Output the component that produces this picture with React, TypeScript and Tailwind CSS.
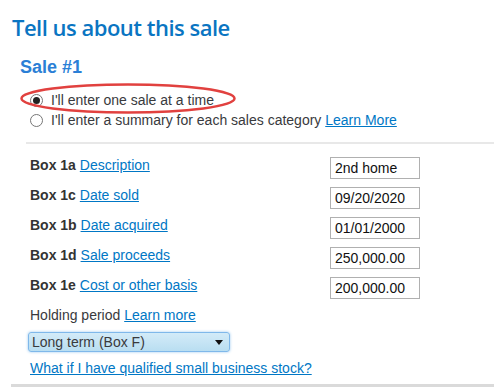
import React from "react";

const rows = [
  { box: "Box 1a", label: "Description", value: "2nd home" },
  { box: "Box 1c", label: "Date sold", value: "09/20/2020" },
  { box: "Box 1b", label: "Date acquired", value: "01/01/2000" },
  { box: "Box 1d", label: "Sale proceeds", value: "250,000.00" },
  { box: "Box 1e", label: "Cost or other basis", value: "200,000.00" },
];

const Radio = ({ checked }: { checked?: boolean }) => (
  <span className="flex h-[13px] w-[13px] shrink-0 items-center justify-center rounded-full border border-[#767676] bg-white">
    {checked && <span className="h-[7px] w-[7px] rounded-full bg-[#222]" />}
  </span>
);

const SaleForm = () => {
  return (
    <div className="relative h-[391px] w-[494px] overflow-hidden bg-white font-['Liberation_Sans',Arial,sans-serif] text-[14px] text-[#393a3d]">
      <h1 className="mt-[12px] h-[30px] pl-[12px] font-['Open_Sans',sans-serif] text-[22px] font-semibold leading-[30px] tracking-[-0.5px] text-[#0a75c2]">
        Tell us about this sale
      </h1>
      <h2 className="mt-[15px] pl-[20px] text-[18px] font-bold leading-[20px] text-[#2b7fd6]">
        Sale #1
      </h2>

      <div className="mt-[13px] pl-[30px]">
        <label className="flex h-[20px] items-center gap-[8px]">
          <Radio checked />
          <span>I'll enter one sale at a time</span>
        </label>
        <label className="flex h-[20px] items-center gap-[8px]">
          <Radio />
          <span>
            I'll enter a summary for each sales category{" "}
            <a className="text-[#0077c5] underline">Learn More</a>
          </span>
        </label>
      </div>

      <div className="ml-[26px] mt-[12px] h-[2px] bg-[#e8e8e8]" />

      <div className="mt-[13px] pl-[30px]">
        {rows.map((row) => (
          <div key={row.box} className="flex h-[30px] items-start">
            <div className="w-[300px] leading-[16px]">
              <span className="font-bold text-[#333]">{row.box}</span>{" "}
              <a className="text-[#0077c5] underline">{row.label}</a>
            </div>
            <div className="flex h-[22px] w-[90px] items-center border border-[#b0b0b0] px-[4px] text-[#111]">
              {row.value}
            </div>
          </div>
        ))}
      </div>

      <div className="pl-[30px] leading-[16px]">
        Holding period <a className="text-[#0077c5] underline">Learn more</a>
      </div>

      <div className="ml-[28px] mt-[9px] flex h-[20px] w-[202px] items-center justify-between rounded-[3px] border border-[#7fb8ea] bg-gradient-to-b from-[#d3ebf8] to-[#b9def1] pl-[3px] pr-[6px] shadow-[0_0_3px_#9cc9f0]">
        <span>Long term (Box F)</span>
        <svg width="8" height="5" viewBox="0 0 8 5">
          <path d="M0 0h8L4 5z" fill="#111" />
        </svg>
      </div>

      <div className="mt-[8px] pl-[30px] leading-[16px]">
        <a className="text-[#0077c5] underline">What if I have qualified small business stock?</a>
      </div>

      <div className="ml-[11px] mt-[8px] h-[3px] bg-[#dadada]" />

      <svg
        className="pointer-events-none absolute left-[20px] top-[83px]"
        width="216"
        height="31"
        viewBox="0 0 216 31"
      >
        <ellipse cx="108" cy="15.5" rx="106.5" ry="14" fill="none" stroke="#e1413f" strokeWidth="2.5" />
      </svg>
    </div>
  );
};

export default function App() {
  return <SaleForm />;
}
